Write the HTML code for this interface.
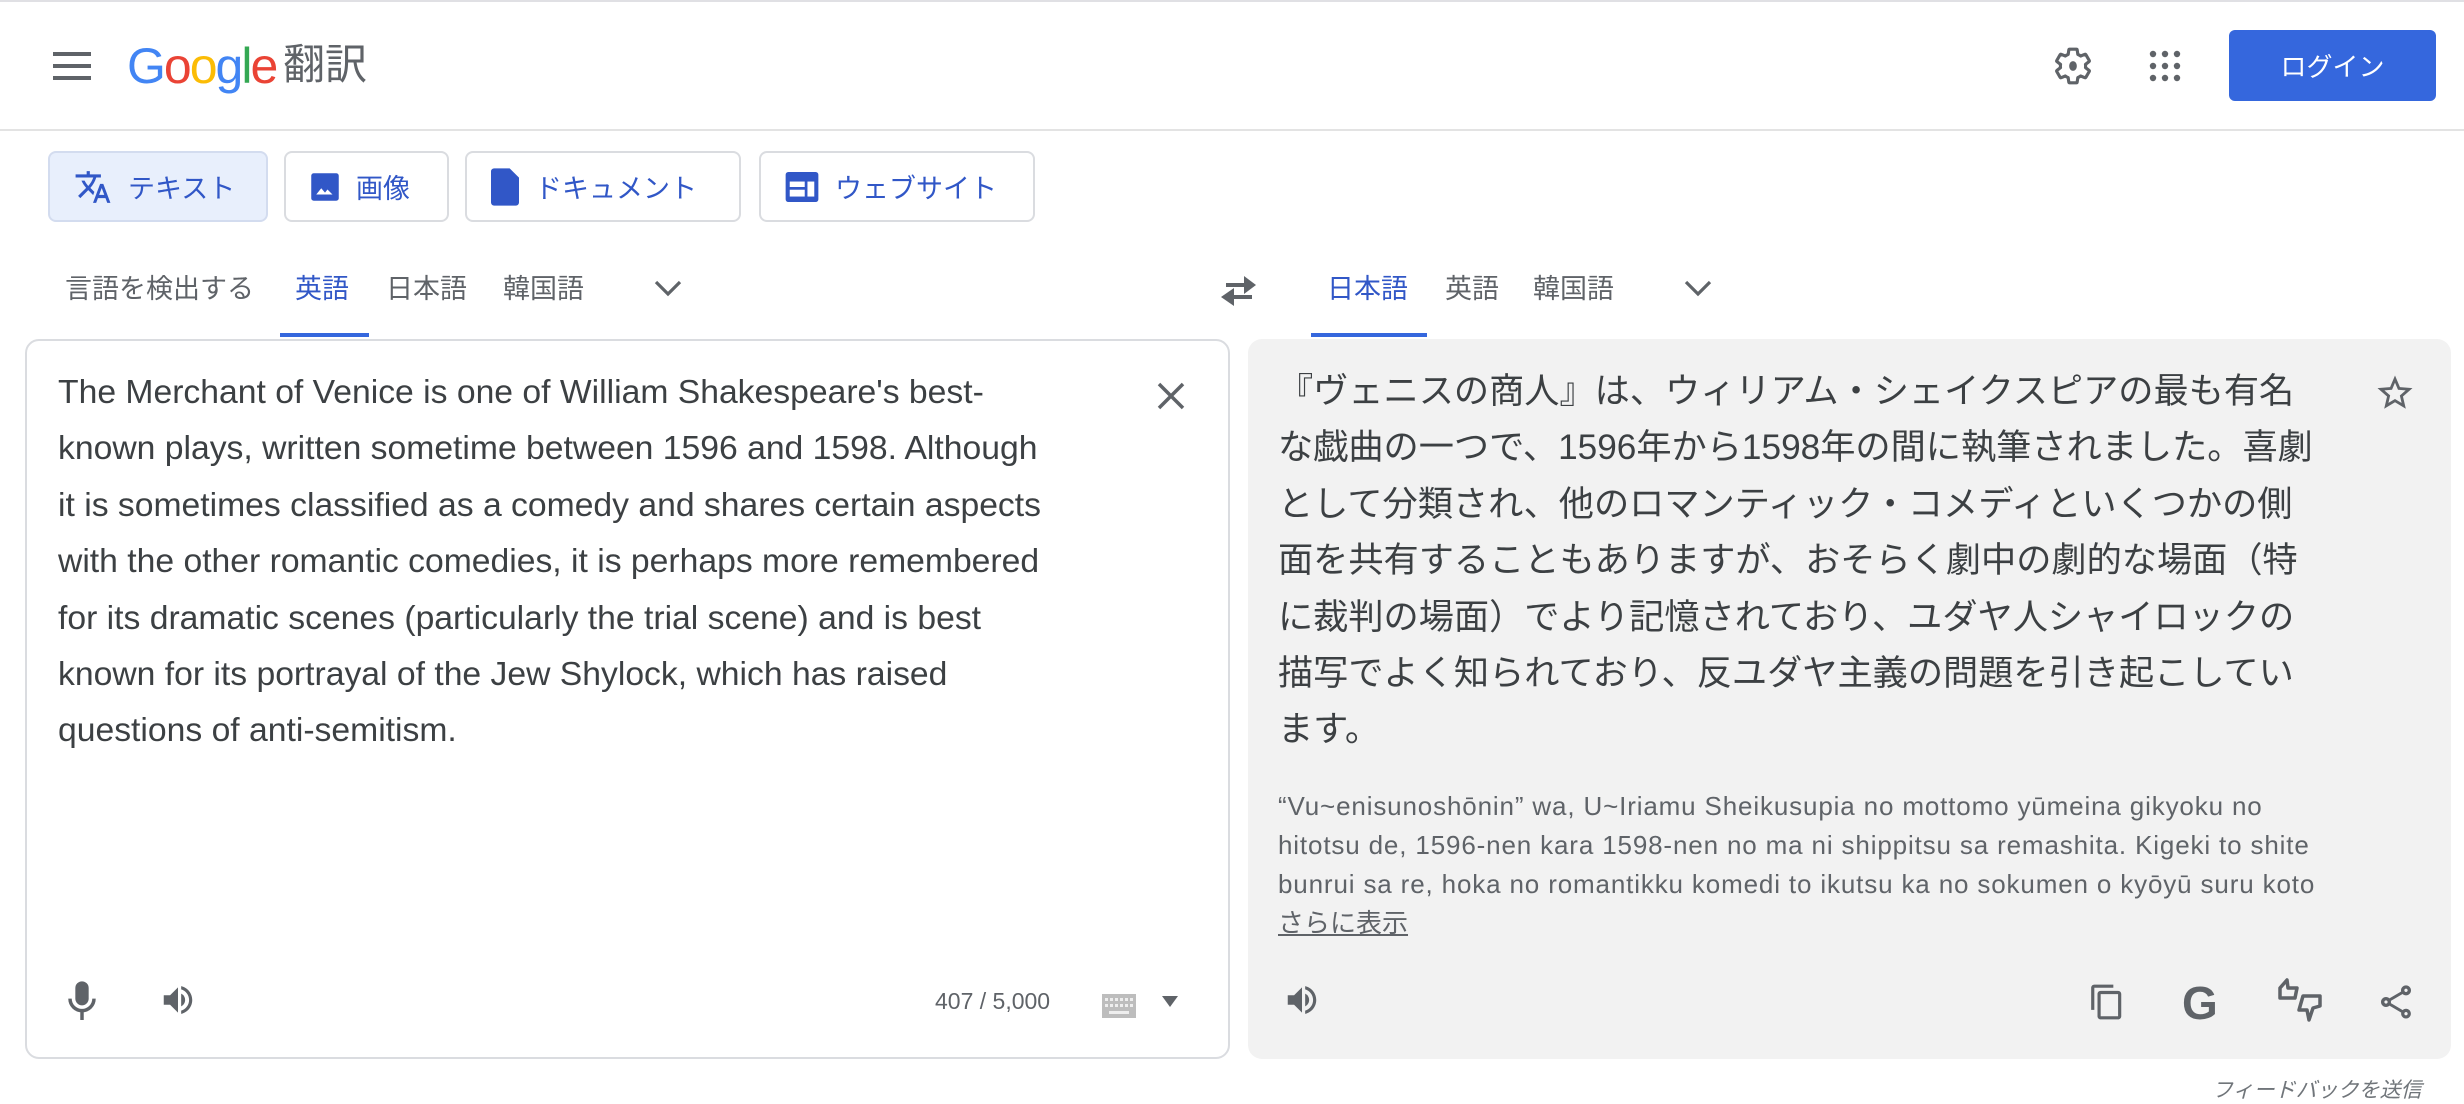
<!DOCTYPE html>
<html><head><meta charset="utf-8">
<style>
*{margin:0;padding:0;box-sizing:border-box}
body{width:2464px;height:1104px;background:#fff;position:relative;overflow:hidden;font-family:"Liberation Sans","Noto Sans CJK JP",sans-serif;color:#3c4043}
.a{position:absolute}
.topline{left:0;top:0;width:2464px;height:2px;background:#e0e0e4}
.hdr{left:0;top:129px;width:2464px;height:2px;background:#e3e3e3}
.btn{position:absolute;top:151px;height:71px;border:2px solid #dadce0;border-radius:8px;display:flex;align-items:center;padding-left:24px;font-size:27px;color:#3157c7;gap:16px}
.tab{position:absolute;top:271px;font-size:27px;color:#5f6368;line-height:36px}
.blue{color:#3157c7}
.src{left:25px;top:339px;width:1205px;height:720px;border:2px solid #dadce0;border-radius:14px}
.tgt{left:1248px;top:339px;width:1203px;height:720px;background:#f2f2f2;border-radius:14px}
.srctext{left:58px;top:364px;font-size:33.7px;line-height:56.4px;color:#3c4043;white-space:nowrap}
.jp{left:1278px;top:364px;font-size:35.2px;line-height:56.4px;color:#3c4043;white-space:nowrap}
.rom{left:1278px;top:787px;font-size:26px;line-height:39px;color:#5f6368;white-space:nowrap;letter-spacing:0.85px}
</style></head><body>
<div class="a topline"></div>
<svg class="a" style="left:53px;top:52px" width="38" height="28" viewBox="0 0 38 28"><rect y="0" width="38" height="4" fill="#5f6368"/><rect y="12" width="38" height="4" fill="#5f6368"/><rect y="24" width="38" height="4" fill="#5f6368"/></svg>
<div class="a" style="left:127px;top:36px;font-size:50px;line-height:60px;letter-spacing:-2px"><span style="color:#4285f4">G</span><span style="color:#ea4335">o</span><span style="color:#fbbc05">o</span><span style="color:#4285f4">g</span><span style="color:#34a853">l</span><span style="color:#ea4335">e</span></div>
<div class="a" style="left:283px;top:40px;font-size:42px;line-height:50px;color:#5f6368">翻訳</div>
<svg class="a" style="left:2052px;top:45px" width="42" height="42" viewBox="0 0 24 24"><path fill="none" stroke="#5f6368" stroke-width="1.8" stroke-linejoin="round" d="M19.14 12.94c.04-.3.06-.61.06-.94s-.02-.64-.07-.94l2.03-1.58a.49.49 0 0 0 .12-.61l-1.92-3.32a.49.49 0 0 0-.59-.22l-2.39.96c-.5-.38-1.03-.7-1.620-.94l-.36-2.54a.48.48 0 0 0-.48-.41h-3.84c-.24 0-.43.17-.47.41l-.36 2.54c-.59.24-1.13.57-1.62.94l-2.39-.96a.48.48 0 0 0-.59.22L2.74 8.87c-.12.21-.08.47.12.61l2.03 1.58c-.05.3-.09.63-.09.94s.02.64.07.94l-2.03 1.58a.49.49 0 0 0-.12.61l1.92 3.32c.12.22.37.29.59.22l2.39-.96c.5.38 1.03.7 1.62.94l.36 2.54c.05.24.24.41.48.41h3.84c.24 0 .44-.17.47-.41l.36-2.54c.59-.24 1.13-.56 1.62-.94l2.39.96c.22.08.47 0 .59-.22l1.92-3.32c.12-.22.07-.47-.12-.61l-2.01-1.58z"/><ellipse cx="12" cy="12" rx="2.2" ry="2.8" fill="#5f6368"/></svg>
<svg class="a" style="left:2149px;top:50px" width="32" height="32" viewBox="0 0 32 32" fill="#5f6368"><circle cx="4" cy="4" r="3.2"/><circle cx="16" cy="4" r="3.2"/><circle cx="28" cy="4" r="3.2"/><circle cx="4" cy="16" r="3.2"/><circle cx="16" cy="16" r="3.2"/><circle cx="28" cy="16" r="3.2"/><circle cx="4" cy="28" r="3.2"/><circle cx="16" cy="28" r="3.2"/><circle cx="28" cy="28" r="3.2"/></svg>
<div class="a" style="left:2229px;top:30px;width:207px;height:71px;background:#3567dd;border-radius:6px;color:#fff;font-size:26px;display:flex;align-items:center;justify-content:center">ログイン</div>
<div class="a hdr"></div>

<div class="btn" style="left:48px;width:220px;background:#e8effc;border-color:#d3dcef">
<svg width="38" height="38" viewBox="0 0 24 24"><path fill="#3157c7" d="M12.87 15.07l-2.54-2.51.03-.03A17.52 17.52 0 0 0 14.07 6H17V4h-7V2H8v2H1v1.99h11.17C11.5 7.92 10.44 9.75 9 11.35 8.07 10.32 7.3 9.19 6.69 8h-2c.73 1.63 1.73 3.17 2.98 4.56l-5.09 5.02L4 19l5-5 3.11 3.11.76-2.04zM18.5 10h-2L12 22h2l1.12-3h4.75L21 22h2l-4.5-12zm-2.62 7l1.62-4.33L19.12 17h-3.24z"/></svg><span>テキスト</span></div>
<div class="btn" style="left:284px;width:165px">
<svg width="30" height="30" viewBox="0 0 24 24"><rect x="1" y="1" width="22" height="22" rx="2" fill="#3157c7"/><path d="M5 18l4-5 3 3.5 2-2.5 4 4z" fill="#fff"/></svg><span>画像</span></div>
<div class="btn" style="left:465px;width:276px">
<svg width="28" height="38" viewBox="0 0 18 24"><path d="M2 0h10l6 6v16a2 2 0 0 1-2 2H2a2 2 0 0 1-2-2V2a2 2 0 0 1 2-2z" fill="#3157c7"/></svg><span>ドキュメント</span></div>
<div class="btn" style="left:759px;width:276px">
<svg width="34" height="30" viewBox="0 0 24 22"><rect x="0" y="0" width="24" height="22" rx="2" fill="#3157c7"/><rect x="3" y="7" width="11" height="4" fill="#fff"/><rect x="3" y="13" width="11" height="5" fill="#fff"/><rect x="16" y="7" width="5" height="11" fill="#fff"/></svg><span>ウェブサイト</span></div>

<div class="tab" style="left:65px">言語を検出する</div>
<div class="tab blue" style="left:295px">英語</div>
<div class="a" style="left:280px;top:333px;width:89px;height:4px;background:#3567dd"></div>
<div class="tab" style="left:386px">日本語</div>
<div class="tab" style="left:503px">韓国語</div>
<svg class="a" style="left:653px;top:278px" width="30" height="20" viewBox="0 0 30 20"><path d="M3 4l12 12 12-12" stroke="#5f6368" stroke-width="3.2" fill="none"/></svg>
<svg class="a" style="left:1218px;top:274px" width="40" height="32" viewBox="0 0 40 32"><path d="M8 11h20" stroke="#5f6368" stroke-width="4"/><path d="M26 2l12 9-12 9z" fill="#5f6368"/><path d="M14 23h20" stroke="#5f6368" stroke-width="4"/><path d="M16 14l-13 9 13 9z" fill="#5f6368"/></svg>
<div class="tab blue" style="left:1327px">日本語</div>
<div class="a" style="left:1311px;top:333px;width:116px;height:4px;background:#3567dd"></div>
<div class="tab" style="left:1445px">英語</div>
<div class="tab" style="left:1533px">韓国語</div>
<svg class="a" style="left:1683px;top:278px" width="30" height="20" viewBox="0 0 30 20"><path d="M3 4l12 12 12-12" stroke="#5f6368" stroke-width="3.2" fill="none"/></svg>

<div class="a src"></div>
<div class="a srctext">The Merchant of Venice is one of William Shakespeare's best-<br>known plays, written sometime between 1596 and 1598. Although<br>it is sometimes classified as a comedy and shares certain aspects<br>with the other romantic comedies, it is perhaps more remembered<br>for its dramatic scenes (particularly the trial scene) and is best<br>known for its portrayal of the Jew Shylock, which has raised<br>questions of anti-semitism.</div>
<svg class="a" style="left:1157px;top:382px" width="28" height="28" viewBox="0 0 28 28"><path d="M2 2l24 24M26 2L2 26" stroke="#5f6368" stroke-width="3.5"/></svg>
<svg class="a" style="left:66px;top:980px" width="32" height="40" viewBox="0 0 24 30"><rect x="7" y="1" width="10" height="18" rx="5" fill="#5f6368"/><path d="M3 14a9 9 0 0 0 18 0" stroke="#5f6368" stroke-width="2.6" fill="none"/><path d="M12 23v7" stroke="#5f6368" stroke-width="2.6"/></svg>
<svg class="a" style="left:158px;top:981px" width="40" height="38" viewBox="0 0 24 24"><path fill="#5f6368" d="M3 9v6h4l5 5V4L7 9H3zm13.5 3A4.5 4.5 0 0 0 14 7.97v8.05c1.48-.73 2.5-2.25 2.5-4.02zM14 3.23v2.06c2.89.86 5 3.54 5 6.71s-2.11 5.85-5 6.71v2.06c4.01-.91 7-4.49 7-8.77s-2.99-7.86-7-8.77z"/></svg>
<div class="a" style="left:935px;top:988px;font-size:23px;color:#5f6368">407 / 5,000</div>
<svg class="a" style="left:1102px;top:994px" width="34" height="24" viewBox="0 0 34 24"><rect width="34" height="24" fill="#bdbdbd"/><g fill="#eee"><rect x="3" y="4" width="3" height="3"/><rect x="8" y="4" width="3" height="3"/><rect x="13" y="4" width="3" height="3"/><rect x="18" y="4" width="3" height="3"/><rect x="23" y="4" width="3" height="3"/><rect x="28" y="4" width="3" height="3"/><rect x="3" y="10" width="3" height="3"/><rect x="8" y="10" width="3" height="3"/><rect x="13" y="10" width="3" height="3"/><rect x="18" y="10" width="3" height="3"/><rect x="23" y="10" width="3" height="3"/><rect x="28" y="10" width="3" height="3"/><rect x="7" y="17" width="20" height="3"/></g></svg>
<svg class="a" style="left:1162px;top:996px" width="16" height="12" viewBox="0 0 16 12"><path d="M0 0h16L8 11z" fill="#5f6368"/></svg>

<div class="a tgt"></div>
<div class="a jp">『ヴェニスの商人』は、ウィリアム・シェイクスピアの最も有名<br>な戯曲の一つで、1596年から1598年の間に執筆されました。喜劇<br>として分類され、他のロマンティック・コメディといくつかの側<br>面を共有することもありますが、おそらく劇中の劇的な場面（特<br>に裁判の場面）でより記憶されており、ユダヤ人シャイロックの<br>描写でよく知られており、反ユダヤ主義の問題を引き起こしてい<br>ます。</div>
<svg class="a" style="left:2374px;top:372px" width="42" height="42" viewBox="0 0 24 24"><path fill="#5f6368" d="M22 9.24l-7.19-.62L12 2 9.19 8.63 2 9.24l5.46 4.73L5.82 21 12 17.27 18.18 21l-1.63-7.03L22 9.24zM12 15.4l-3.76 2.27 1-4.28-3.32-2.88 4.38-.38L12 6.1l1.71 4.04 4.38.38-3.32 2.88 1 4.28L12 15.4z"/></svg>
<div class="a rom">“Vu~enisunoshōnin” wa, U~Iriamu Sheikusupia no mottomo yūmeina gikyoku no<br>hitotsu de, 1596-nen kara 1598-nen no ma ni shippitsu sa remashita. Kigeki to shite<br>bunrui sa re, hoka no romantikku komedi to ikutsu ka no sokumen o kyōyū suru koto<br><span style="text-decoration:underline;letter-spacing:0">さらに表示</span></div>
<svg class="a" style="left:1282px;top:981px" width="40" height="38" viewBox="0 0 24 24"><path fill="#5f6368" d="M3 9v6h4l5 5V4L7 9H3zm13.5 3A4.5 4.5 0 0 0 14 7.97v8.05c1.48-.73 2.5-2.25 2.5-4.02zM14 3.23v2.06c2.89.86 5 3.54 5 6.71s-2.11 5.85-5 6.71v2.06c4.01-.91 7-4.49 7-8.77s-2.99-7.86-7-8.77z"/></svg>
<svg class="a" style="left:2088px;top:982px" width="38" height="40" viewBox="0 0 24 24"><path fill="#5f6368" d="M16 1H4c-1.1 0-2 .9-2 2v14h2V3h12V1zm3 4H8c-1.1 0-2 .9-2 2v14c0 1.1.9 2 2 2h11c1.1 0 2-.9 2-2V7c0-1.1-.9-2-2-2zm0 16H8V7h11v14z"/></svg>
<div class="a" style="left:2182px;top:978px;font-size:46px;font-weight:bold;color:#5f6368;line-height:50px">G</div>
<svg class="a" style="left:2276px;top:978px" width="48" height="48" viewBox="0 0 48 48"><path d="M4 10l7-8 1 8h9l-2 10H4z" stroke="#5f6368" stroke-width="3.5" fill="none" stroke-linejoin="round"/><path d="M27 18h17v10l-7 2-4 12-2-10h-8z" stroke="#5f6368" stroke-width="3.5" fill="none" stroke-linejoin="round"/></svg>
<svg class="a" style="left:2376px;top:982px" width="40" height="40" viewBox="0 0 24 24"><path fill="#5f6368" d="M18 16.08c-.76 0-1.44.3-1.96.77L8.91 12.7c.05-.23.09-.46.09-.7s-.04-.47-.09-.7l7.05-4.11c.54.5 1.25.81 2.04.81 1.66 0 3-1.34 3-3s-1.34-3-3-3-3 1.34-3 3c0 .24.04.47.09.7L8.04 9.81C7.5 9.31 6.79 9 6 9c-1.66 0-3 1.34-3 3s1.34 3 3 3c.79 0 1.5-.31 2.04-.81l7.12 4.16c-.05.21-.08.43-.08.65 0 1.61 1.31 2.92 2.92 2.92s2.92-1.31 2.92-2.92-1.31-2.92-2.92-2.92zM18 4c.55 0 1 .45 1 1s-.45 1-1 1-1-.45-1-1 .45-1 1-1zM6 13c-.55 0-1-.45-1-1s.45-1 1-1 1 .45 1 1-.45 1-1 1zm12 7.02c-.55 0-1-.45-1-1s.45-1 1-1 1 .45 1 1-.45 1-1 1z"/></svg>
<div class="a" style="left:2212px;top:1074px;font-size:21px;font-style:italic;color:#70757a">フィードバックを送信</div>
</body></html>
